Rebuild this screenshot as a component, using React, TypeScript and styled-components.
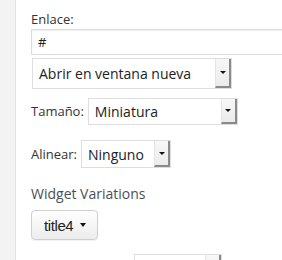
import React from 'react'
import styled, { createGlobalStyle } from 'styled-components'

const Global = createGlobalStyle`
  html, body { margin: 0; padding: 0; background: #fff; }
  body { font-family: "Open Sans", "Liberation Sans", sans-serif; color: #333; }
`

const Page = styled.div`
  display: flex;
  width: 282px;
  height: 260px;
  overflow: hidden;
`

const Rail = styled.div`
  width: 15px;
  flex-shrink: 0;
  background: #f3f3f3;
  border-right: 1px solid #e2e2e2;
`

const Content = styled.div`
  flex: 1;
  padding: 11px 0 0 15px;
  display: flex;
  flex-direction: column;
  align-items: flex-start;
  & > * { flex-shrink: 0; }
`

const Label = styled.label`
  font-size: 13px;
  line-height: 17px;
  color: #333;
`

const TextInput = styled.div`
  box-sizing: border-box;
  width: 270px;
  height: 26px;
  margin-top: 1px;
  border: 1px solid #dcdcdc;
  box-shadow: inset 0 1px 2px rgba(0, 0, 0, 0.07);
  padding: 0 6px;
  font-size: 13px;
  line-height: 24px;
  color: #222;
`

const SelectBox = styled.div<{ $w: number; $h: number }>`
  box-sizing: border-box;
  width: ${p => p.$w}px;
  height: ${p => p.$h}px;
  display: flex;
  align-items: stretch;
  border: 1px solid #dedede;
  background: #fff;
  font-size: 14px;
  color: #222;
`

const SelectText = styled.div`
  flex: 1;
  padding-left: 6px;
  display: flex;
  align-items: center;
  white-space: nowrap;
  overflow: hidden;
`

const ArrowBox = styled.div`
  width: 13px;
  flex-shrink: 0;
  background: linear-gradient(#f7f7f7, #ebebeb);
  border-left: 1px solid #e4e4e4;
  border-right: 2px solid #8a8a8a;
  border-bottom: 2px solid #8a8a8a;
  display: flex;
  align-items: center;
  justify-content: center;
  &::after {
    content: '';
    border-left: 3px solid transparent;
    border-right: 3px solid transparent;
    border-top: 3px solid #111;
  }
`

const SelectWrap = styled.div`
  margin-top: 3px;
  margin-left: 1px;
`

const Row = styled.div<{ $mt: number }>`
  display: flex;
  align-items: center;
  gap: 4px;
  margin-top: ${p => p.$mt}px;
`

const Heading = styled.div`
  margin-top: 17px;
  font-size: 14px;
  line-height: 18px;
  color: #4a5058;
`

const DropButton = styled.div`
  box-sizing: border-box;
  margin-top: 7px;
  height: 30px;
  padding: 0 11px 0 12px;
  display: flex;
  align-items: center;
  gap: 7px;
  border: 1px solid #cfcfcf;
  border-radius: 4px;
  background: linear-gradient(#ffffff, #ececec);
  box-shadow: 0 1px 1px rgba(0, 0, 0, 0.05);
  font-family: "Liberation Sans", Arial, sans-serif;
  font-size: 15px;
  color: #222;
  letter-spacing: -0.4px;
  &::after {
    content: '';
    border-left: 3.5px solid transparent;
    border-right: 3.5px solid transparent;
    border-top: 4px solid #111;
  }
`

const Bottom = styled.div`
  margin-top: 14px;
  margin-left: 103px;
`

const Select = ({ value, w, h }: { value: string; w: number; h: number }) => (
  <SelectBox $w={w} $h={h}>
    <SelectText>{value}</SelectText>
    <ArrowBox />
  </SelectBox>
)

export default function App() {
  return (
    <Page>
      <Global />
      <Rail />
      <Content>
        <Label>Enlace:</Label>
        <TextInput>#</TextInput>
        <SelectWrap>
          <Select value="Abrir en ventana nueva" w={200} h={31} />
        </SelectWrap>
        <Row $mt={9}>
          <Label>Tamaño:</Label>
          <Select value="Miniatura" w={150} h={27} />
        </Row>
        <Row $mt={15}>
          <Label>Alinear:</Label>
          <Select value="Ninguno" w={90} h={28} />
        </Row>
        <Heading>Widget Variations</Heading>
        <DropButton>title4</DropButton>
        <Bottom>
          <Select value="" w={88} h={27} />
        </Bottom>
      </Content>
    </Page>
  )
}
